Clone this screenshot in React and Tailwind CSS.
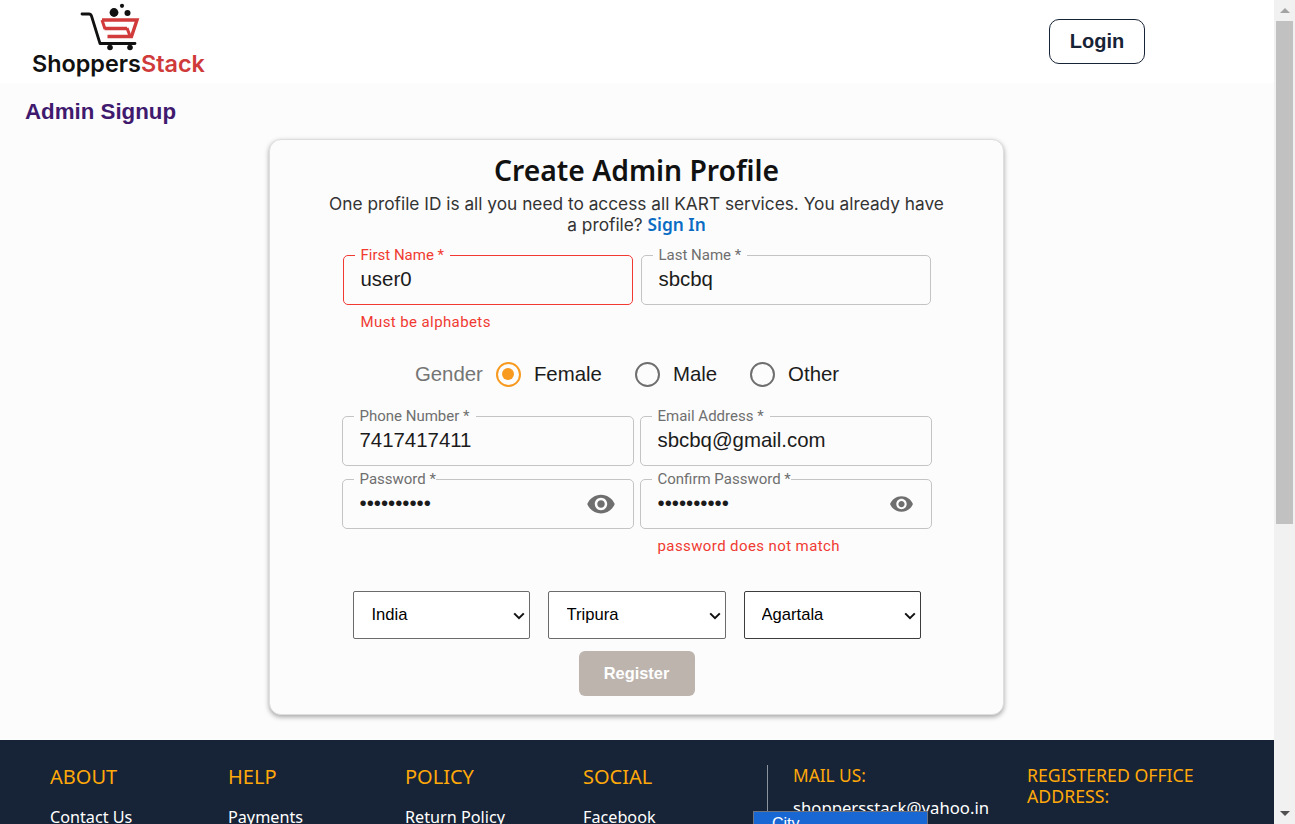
import React from 'react';

const EYE = 'M12 4.5C7 4.5 2.73 7.61 1 12c1.73 4.39 6 7.5 11 7.5s9.27-3.11 11-7.5c-1.73-4.39-6-7.5-11-7.5zM12 17c-2.76 0-5-2.24-5-5s2.24-5 5-5 5 2.24 5 5-2.24 5-5 5zm0-8c-1.66 0-3 1.34-3 3s1.34 3 3 3 3-1.34 3-3-1.34-3-3-3z';

const Logo = () => (
  <div className="flex flex-col w-[176px] ml-[32px]">
    <svg width="60" height="50" viewBox="0 0 60 50" className="ml-[48px] mt-[2px]">
      <circle cx="34" cy="10.5" r="4.4" fill="#111" />
      <circle cx="47.5" cy="11" r="3" fill="#111" />
      <circle cx="42" cy="3.8" r="2.1" fill="#111" />
      <path d="M2 12h7c1.5 0 2 .5 2.5 2l8.5 27.5h35" fill="none" stroke="#111" strokeWidth="2.8" strokeLinecap="round" strokeLinejoin="round" />
      <path d="M22 18H57L51.5 34.5H27.5M24.5 26.5H47" fill="none" stroke="#d13b3b" strokeWidth="3.4" />
      <path d="M22 18L25 27M47 26l3 8" fill="none" stroke="#d13b3b" strokeWidth="3" />
      <circle cx="30" cy="45.5" r="2.8" fill="#111" />
      <circle cx="50" cy="45.5" r="2.8" fill="#111" />
    </svg>
    <div className="text-[23.4px] leading-[24px] font-semibold text-[#111] whitespace-nowrap font-['Inter',sans-serif]">
      Shoppers<span className="text-[#cf3a3a]">Stack</span>
    </div>
  </div>
);

const Field = ({ label, value, type = 'text', error, labelBg = 'px-[6px]', left = 'left-[11px]', eye }) => (
  <div className={`relative h-[50px] rounded-[5px] border ${error ? 'border-[#f03a32]' : 'border-[#c4c4c4]'}`}>
    <span className={`absolute top-[-10px] ${left} ${labelBg} bg-[#fcfcfc] text-[15px] leading-[18px] whitespace-nowrap font-['Roboto',sans-serif] ${error ? 'text-[#f03a32]' : 'text-[#6f6f6f]'}`}>
      {label} *
    </span>
    <input
      readOnly
      type={type}
      value={value}
      className="w-full h-full bg-transparent pl-[17px] pr-[56px] pb-[2px] text-[20.4px] text-[#1b1b1b] outline-none font-['Liberation_Sans',sans-serif]"
    />
    {eye && (
      <svg width={eye} height={eye} viewBox="0 0 24 24" fill="#6f6f6f" className="absolute top-1/2 -translate-y-1/2 right-[17px]">
        <path d={EYE} />
      </svg>
    )}
  </div>
);

const Radio = ({ label, checked }) => (
  <div className="flex items-center gap-[13px]">
    <span className={`flex items-center justify-center w-[25px] h-[25px] rounded-full border-[2.5px] ${checked ? 'border-[#f79a1f]' : 'border-[#6f6f6f]'}`}>
      {checked && <span className="w-[12px] h-[12px] rounded-full bg-[#f79a1f]" />}
    </span>
    <span className="text-[20.4px] text-[#1b1b1b]">{label}</span>
  </div>
);

const Dropdown = ({ value, className = '', selectClass = 'pl-[18px] border-[#6b6b6b]' }) => (
  <div className={`relative ${className}`}>
    <select
      defaultValue={value}
      className={`w-full h-[48px] appearance-none rounded-[2px] border bg-white text-[16.6px] text-black font-['Liberation_Sans',sans-serif] ${selectClass}`}
    >
      <option>{value}</option>
    </select>
    <svg width="12" height="8" viewBox="0 0 12 8" className="absolute right-[5px] top-[21px] pointer-events-none">
      <path d="M1.2 1.4L6 6.2l4.8-4.8" fill="none" stroke="#111" strokeWidth="2" />
    </svg>
  </div>
);

const FooterCol = ({ title, link, className = '' }) => (
  <div className={className}>
    <div className="text-[20px] leading-[24px] text-[#ffa90a]">{title}</div>
    <div className="mt-[16px] text-[16.2px] leading-[24px] text-white">{link}</div>
  </div>
);

const Scrollbar = () => (
  <div className="flex flex-col items-center justify-between w-[21px] h-full bg-[#f1f1f1] shrink-0">
    <div className="w-full flex flex-col items-center">
      <div className="h-[21px] flex items-center justify-center">
        <span className="w-0 h-0 border-x-[5px] border-x-transparent border-b-[5px] border-b-[#a3a3a3]" />
      </div>
      <div className="w-[17px] h-[503px] bg-[#c1c1c1]" />
    </div>
    <div className="h-[21px] flex items-center justify-center">
      <span className="w-0 h-0 border-x-[5px] border-x-transparent border-t-[5px] border-t-[#505050]" />
    </div>
  </div>
);

export default function App() {
  return (
    <div className="relative flex w-[1295px] h-[824px] overflow-hidden bg-white font-['Liberation_Sans',sans-serif]">
      <div className="flex-1 min-w-0 flex flex-col">
        {/* header */}
        <header className="flex items-start justify-between h-[83px] shrink-0 bg-white">
          <Logo />
          <button className="mt-[19px] mr-[129px] w-[96px] h-[45px] pb-[2px] rounded-[10px] border border-[#172336] bg-white text-[20px] font-bold text-[#172336]">
            Login
          </button>
        </header>

        <main className="h-[657px] shrink-0 bg-[#fcfcfc]">
          <h2 className="ml-[25px] mt-[16px] h-[26px] text-[22.3px] leading-[26px] font-bold text-[#3f1a6e]">Admin Signup</h2>

          <div className="ml-[269px] mt-[14px] w-[735px] h-[576px] rounded-[12px] border border-[#dedede] bg-[#fcfcfc] shadow-[0_2px_5px_rgba(0,0,0,0.35)] flex flex-col items-center">
            <h1 className="mt-[11px] text-[28.3px] leading-[38px] font-semibold text-[#111] font-['Noto_Sans',sans-serif]">Create Admin Profile</h1>
            <p className="mt-[4px] w-[620px] text-center text-[17.3px] leading-[21px] text-[#333] font-['Inter',sans-serif]">
              One profile ID is all you need to access all KART services. You already have a profile?{' '}
              <span className="font-semibold text-[#0b6cc4] font-['Noto_Sans',sans-serif]">Sign In</span>
            </p>

            <div className="mt-[20px] w-[588px] grid grid-cols-[290px_290px] gap-x-[8px] font-['Liberation_Sans',sans-serif]">
              <Field label="First Name" value="user0" error />
              <Field label="Last Name" value="sbcbq" />
              <div className="mt-[8px] ml-[18px] text-[15px] leading-[18px] tracking-[0.4px] text-[#f03a32] font-['Roboto',sans-serif]">Must be alphabets</div>
            </div>

            <div className="mt-[30px] ml-[-19px] flex items-center h-[26px] font-['Liberation_Sans',sans-serif]">
              <span className="text-[20.4px] text-[#757575] mr-[13px]">Gender</span>
              <Radio label="Female" checked />
              <span className="w-[33px]" />
              <Radio label="Male" />
              <span className="w-[33px]" />
              <Radio label="Other" />
            </div>

            <div className="mt-[29px] w-[590px] grid grid-cols-[292px_292px] gap-x-[6px] gap-y-[13px] font-['Liberation_Sans',sans-serif]">
              <Field label="Phone Number" value="7417417411" />
              <Field label="Email Address" value="sbcbq@gmail.com" />
              <Field label="Password" value="1234567890" type="password" eye={30} labelBg="pl-[6px]" />
              <Field label="Confirm Password" value="1234567890" type="password" eye={25} labelBg="pl-[6px]" />
              <div />
              <div className="ml-[18px] mt-[-5px] text-[15px] leading-[18px] tracking-[0.4px] text-[#f03a32] font-['Roboto',sans-serif]">password does not match</div>
            </div>

            <div className="mt-[36px] flex gap-[18px]">
              <Dropdown value="India" className="w-[177px]" />
              <Dropdown value="Tripura" className="w-[178px]" />
              <Dropdown value="Agartala" className="w-[177px]" selectClass="pl-[17px] border-[#3c3c3c]" />
            </div>

            <button className="mt-[12px] w-[116px] h-[45px] rounded-[6px] bg-[#bdb4ae] text-[16.4px] font-bold text-white font-['Liberation_Sans',sans-serif]">
              Register
            </button>
          </div>
        </main>

        {/* footer, cut by the window */}
        <footer className="flex-1 bg-[#172336] flex pt-[25px] pl-[50px] font-['Noto_Sans',sans-serif]">
          <FooterCol title="ABOUT" link="Contact Us" className="w-[178px]" />
          <FooterCol title="HELP" link="Payments" className="w-[177px]" />
          <FooterCol title="POLICY" link="Return Policy" className="w-[178px]" />
          <FooterCol title="SOCIAL" link="Facebook" className="w-[184px]" />
          <div className="w-px h-[100px] bg-[#8b93a0]" />
          <div className="ml-[25px] w-[234px]">
            <div className="text-[17.3px] leading-[22px] text-[#ffa90a]">MAIL US:</div>
            <div className="mt-[10px] text-[16.7px] leading-[22px] text-white">shoppersstack@yahoo.in</div>
          </div>
          <div className="w-[200px] text-[17.7px] leading-[21px] text-[#ffa90a]">REGISTERED OFFICE ADDRESS:</div>
        </footer>
      </div>

      <Scrollbar />

      {/* open select popup */}
      <div className="absolute left-[753px] top-[811px] w-[175px] h-[40px] bg-[#1967d2] border border-[#6b7280] pl-[18px] pt-[3px] text-[16px] leading-[18px] text-white">
        City
      </div>
    </div>
  );
}
